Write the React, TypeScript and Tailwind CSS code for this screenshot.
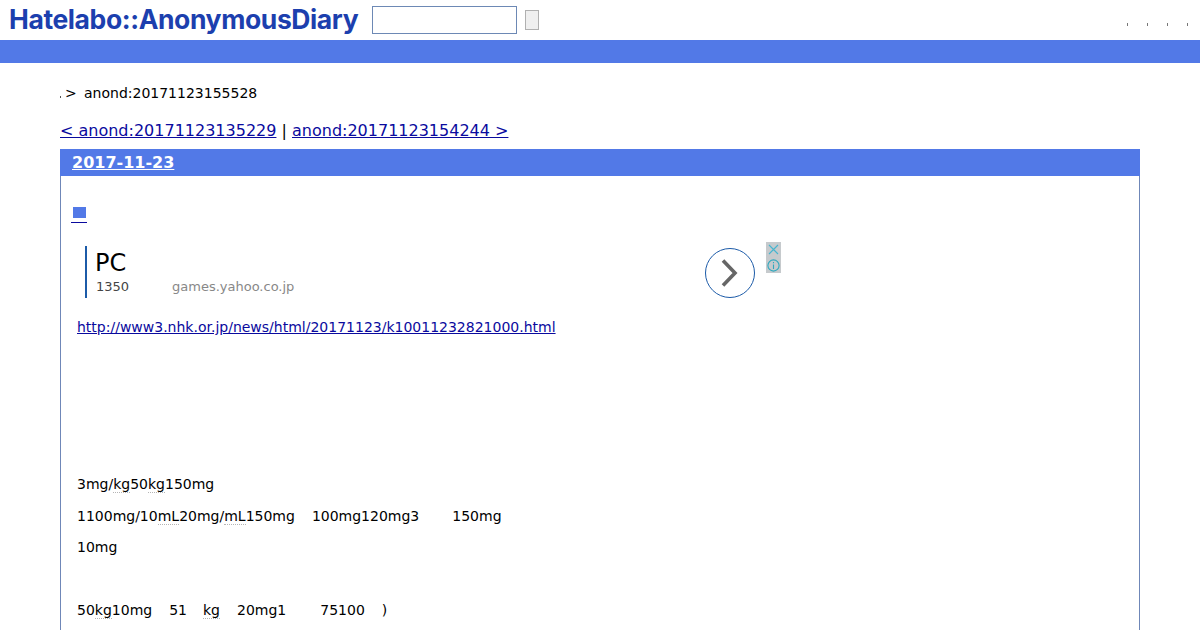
function Abbr({ children }: { children: string }) {
  return <span className="border-b border-dotted border-[#b5b5b5]">{children}</span>;
}

export default function App() {
  return (
    <div className="h-[630px] overflow-hidden bg-white text-black font-['DejaVu_Sans',sans-serif]">
      <header className="flex h-10 items-start">
        <div className="ml-[9px] mt-[1px] h-9 w-[351px] whitespace-nowrap font-['Inter',sans-serif] text-[26.5px] font-bold leading-9 tracking-[-0.4px] text-[#1c3fae]">
          Hatelabo::AnonymousDiary
        </div>
        <input className="ml-[12px] mt-[6px] h-7 w-[145px] border border-[#6d89b5] bg-white" />
        <button className="ml-[8px] mt-[10px] h-5 w-[14px] border border-[#b0b0b0] bg-[#efefef]" />
        <div className="ml-auto mr-[12px] mt-[23px] flex gap-[19px]">
          <span className="h-[3px] w-px bg-[#777]" />
          <span className="h-[3px] w-px bg-[#777]" />
          <span className="h-[3px] w-px bg-[#777]" />
          <span className="h-[3px] w-px bg-[#777]" />
        </div>
      </header>
      <div className="h-[23px] bg-[#5279e7]" />
      <main className="px-[60px]">
        <div className="mt-[21px] flex h-[18px] items-center text-[14px] leading-[18px]">
          <span className="mt-[7px] h-[2px] w-px bg-[#555]" />
          <span className="ml-[4px] w-[19px]">&gt;</span>
          <span>anond:20171123155528</span>
        </div>
        <div className="mt-[19px] h-[20px] whitespace-nowrap text-[16px] leading-[20px]">
          <a className="text-[#0a0a9e] underline">&lt; anond:20171123135229</a>
          <span> | </span>
          <a className="text-[#0a0a9e] underline">anond:20171123154244 &gt;</a>
        </div>
        <section className="mt-[8px] border border-t-0 border-[#6f87b8]">
          <h2 className="-mx-px h-[27px] bg-[#5279e7] pl-[12px] text-[16px] font-bold leading-[27px] text-white">
            <a className="underline">2017-11-23</a>
          </h2>
          <div className="pl-[10px] pt-[27px]">
            <a className="block h-[16px] w-[16px] border-b border-[#0a0a9e] pl-[2px]">
              <span className="mt-[4px] block h-[11px] w-[13px] bg-[#5279e7]" />
            </a>
          </div>
          <div className="relative ml-[24px] mt-[23px] flex h-[52px] w-[696px] items-center">
            <div className="flex h-[52px] flex-col border-l-2 border-[#1c5ba8] pl-[8px]">
              <div className="mt-[1px] h-[32px] text-[24px] leading-[32px]">PC</div>
              <div className="flex text-[13px] leading-[16px]">
                <span className="ml-px w-[76px] text-[#444]">1350</span>
                <span className="text-[#888]">games.yahoo.co.jp</span>
              </div>
            </div>
            <div className="absolute left-[620px] top-[2px] flex h-[50px] w-[50px] items-center justify-center rounded-full border border-[#1c5ba8]">
              <svg width="24" height="32" viewBox="0 0 24 32" fill="none" stroke="#666" strokeWidth="3.6">
                <path d="M5 3.5 L17 16 L5 28.5" />
              </svg>
            </div>
            <div className="absolute left-[681px] top-[-4px] flex w-[15px] flex-col">
              <div className="flex h-[15px] items-center justify-center bg-[#c6cacd]">
                <svg width="11" height="11" viewBox="0 0 11 11" fill="none" stroke="#45b5d0" strokeWidth="1.1">
                  <path d="M1 1 L10 10 M10 1 L1 10" />
                </svg>
              </div>
              <div className="flex h-[16px] items-center justify-center bg-[#c6cacd]">
                <svg width="13" height="13" viewBox="0 0 13 13" fill="none" stroke="#2fa9bf" strokeWidth="1.1">
                  <circle cx="6.5" cy="6.5" r="5.6" />
                  <path d="M6.5 3 V4.3 M6.5 5.5 V10" />
                </svg>
              </div>
            </div>
          </div>
          <div className="ml-[16px] mt-[20px] text-[14px] leading-[18px]">
            <a className="text-[#0a0a9e] underline">http://www3.nhk.or.jp/news/html/20171123/k10011232821000.html</a>
          </div>
          <div className="ml-[16px] mt-[139px] whitespace-pre text-[14px] leading-[18px]">
            <p className="h-[18px]">3mg/<Abbr>kg</Abbr>50<Abbr>kg</Abbr>150mg</p>
            <p className="mt-[14px] h-[18px]">
              1100mg/10<Abbr>mL</Abbr>20mg/<Abbr>mL</Abbr>150mg<span className="ml-[17px]">100mg120mg3</span>
              <span className="ml-[33px]">150mg</span>
            </p>
            <p className="mt-[13px] h-[18px]">10mg</p>
            <p className="mt-[45px] h-[18px]">
              50<Abbr>kg</Abbr>10mg<span className="ml-[17px]">51</span>
              <span className="ml-[16px]"><Abbr>kg</Abbr></span>
              <span className="ml-[17px]">20mg1</span>
              <span className="ml-[34px]">75100</span>
              <span className="ml-[17px]">)</span>
            </p>
          </div>
          <div className="h-40" />
        </section>
      </main>
    </div>
  );
}
